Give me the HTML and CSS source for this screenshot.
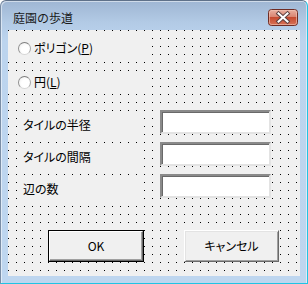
FILE: index.html
```html
<!DOCTYPE html>
<html lang="ja">
<head>
  <meta charset="UTF-8">
  <title>庭園の歩道</title>
  <link rel="stylesheet" href="styles.css">
</head>
<body>
  <div class="window">
    <div class="titlebar">
      <span class="title">庭園の歩道</span>
      <span class="close">
        <svg width="30" height="17" viewBox="0 0 30 17">
          <defs>
            <linearGradient id="red" x1="0" y1="0" x2="0" y2="1">
              <stop offset="0" stop-color="#eab2a3"/>
              <stop offset="0.45" stop-color="#d98572"/>
              <stop offset="0.5" stop-color="#c54a30"/>
              <stop offset="1" stop-color="#d8755a"/>
            </linearGradient>
          </defs>
          <rect x="0.5" y="0.5" width="29" height="16" rx="3" fill="url(#red)" stroke="#6e2c24"/>
          <rect x="1.5" y="1.5" width="27" height="14" rx="2" fill="none" stroke="#f2c6b8" stroke-opacity="0.6"/>
          <path d="M10.5 4.5 L19.5 12.5 M19.5 4.5 L10.5 12.5" stroke="#5b4040" stroke-width="4" stroke-linecap="square"/>
          <path d="M10.5 4.5 L19.5 12.5 M19.5 4.5 L10.5 12.5" stroke="#ffffff" stroke-width="2" stroke-linecap="square"/>
        </svg>
      </span>
    </div>
    <div class="client">
      <div class="radio first">
        <span class="circle"></span>
        <span>ポリゴン(<u>P</u>)</span>
      </div>
      <div class="radio">
        <span class="circle"></span>
        <span>円(<u>L</u>)</span>
      </div>

      <div class="field first">
        <span class="label">タイルの半径</span>
        <span class="textbox"></span>
      </div>
      <div class="field">
        <span class="label">タイルの間隔</span>
        <span class="textbox"></span>
      </div>
      <div class="field">
        <span class="label">辺の数</span>
        <span class="textbox"></span>
      </div>

      <div class="buttons">
        <span class="btn default"><span class="face">OK</span></span>
        <span class="btn cancel"><span class="face">キャンセル</span></span>
      </div>
    </div>
  </div>
</body>
</html>
```

FILE: styles.css
```css
html,
body {
  margin: 0;
  padding: 0;
  background: #ffffff;
}

body {
  font-family: "Noto Sans CJK JP", "Noto Sans", sans-serif;
  font-size: 12px;
  color: #000;
}

/* window frame */
.window {
  box-sizing: border-box;
  width: 308px;
  height: 284px;
  border: 1px solid;
  border-color: #5f7189 #20c4e4 #20c4e4 #7b8ea6;
  border-radius: 6px 6px 0 0;
  background: linear-gradient(#9fb6d3, #b3cbe6 22px, #bcd4ee 40px, #bed6ef);
  box-shadow: inset 1px 1px 0 rgba(255, 255, 255, 0.5), inset -1px 0 0 rgba(255, 255, 255, 0.5);
  display: flex;
  flex-direction: column;
}

.titlebar {
  height: 29px;
  display: flex;
  align-items: flex-start;
  justify-content: space-between;
}

.title {
  margin: 9px 0 0 12px;
  line-height: 16px;
  color: #1a1a1a;
}

.close {
  margin: 8px 9px 0 0;
  height: 17px;
  display: block;
}

.close svg {
  display: block;
}

/* form area with design grid */
.client {
  width: 292px;
  height: 246px;
  margin-left: 7px;
  background-color: #000;
  background-image:
    linear-gradient(to right, #f0f0f0 7px, transparent 7px),
    linear-gradient(to bottom, #f0f0f0 7px, #000 7px);
  background-size: 8px 8px;
  background-position: -7px -7px;
  display: flex;
  flex-direction: column;
  font-feature-settings: "palt";
}

/* option buttons */
.radio {
  width: 132px;
  height: 20px;
  margin-top: 14px;
  padding-left: 10px;
  background: #f0f0f0;
  display: flex;
  align-items: center;
  gap: 3px;
  line-height: 14px;
}

.radio.first {
  margin-top: 8px;
}

.circle {
  box-sizing: border-box;
  width: 13px;
  height: 13px;
  border-radius: 50%;
  border: 1px solid;
  border-color: #7e7e7e #a8a8a8 #d6d6d6 #8e8e8e;
  background: radial-gradient(circle at 60% 60%, #ffffff 40%, #ececec);
}

/* label + textbox rows */
.field {
  height: 24px;
  margin-top: 8px;
  display: flex;
  align-items: flex-start;
}

.field.first {
  margin-top: 18px;
}

.label {
  box-sizing: border-box;
  width: 120px;
  height: 22px;
  margin: 3px 0 0 9px;
  padding: 5px 0 0 6px;
  background: #f0f0f0;
  line-height: 14px;
}

.textbox {
  box-sizing: border-box;
  width: 111px;
  height: 24px;
  margin-left: 23px;
  background: #fff;
  border: 2px solid;
  border-color: #8a8a8a #e3e3e3 #e3e3e3 #8a8a8a;
  box-shadow: inset 1px 1px 0 #696969;
}

/* command buttons */
.buttons {
  display: flex;
  margin-top: 32px;
  padding-left: 40px;
  gap: 40px;
}

.btn {
  box-sizing: border-box;
  width: 96px;
  height: 32px;
  display: flex;
}

.face {
  flex: 1;
  display: flex;
  align-items: center;
  justify-content: center;
  background: #f0f0f0;
  line-height: 14px;
}

.btn.default {
  border: 1px solid #000;
}

.btn.default .face {
  border: 1px solid;
  border-color: #ffffff #696969 #696969 #ffffff;
  box-shadow: inset -1px -1px 0 #a0a0a0;
}

.btn.cancel {
  width: 95px;
}

.btn.cancel .face {
  border: 1px solid;
  border-color: #ffffff #696969 #696969 #ffffff;
  box-shadow: inset 1px 1px 0 #e3e3e3, inset -1px -1px 0 #a0a0a0;
}
```
